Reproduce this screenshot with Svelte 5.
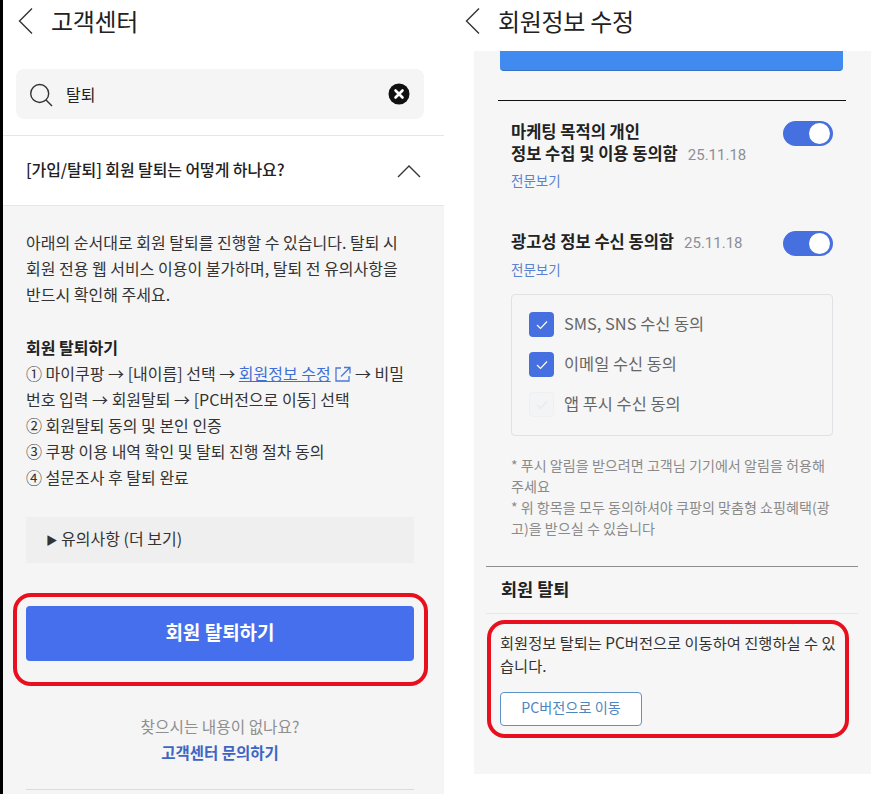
<script lang="ts">
  const steps = [
    "② 회원탈퇴 동의 및 본인 인증",
    "③ 쿠팡 이용 내역 확인 및 탈퇴 진행 절차 동의",
    "④ 설문조사 후 탈퇴 완료",
  ];
  const channels = [
    { label: "SMS, SNS 수신 동의", on: true },
    { label: "이메일 수신 동의", on: true },
    { label: "앱 푸시 수신 동의", on: false },
  ];
</script>

<div class="page">
  <section class="left">
    <header class="bar">
      <svg class="back" width="15" height="26" viewBox="0 0 15 26" aria-hidden="true"><path d="M14 .5 1.500 13 14 25.500" /></svg>
      <h1>고객센터</h1>
    </header>
    <div class="search-wrap">
      <div class="search">
        <svg width="26" height="26" viewBox="0 0 26 26" aria-hidden="true" class="lens">
          <circle cx="9.700" cy="12.500" r="9" />
          <path d="m16 19 6 6" />
        </svg>
        <span class="query">탈퇴</span>
        <svg class="clear" width="22" height="22" viewBox="0 0 22 22" aria-hidden="true">
          <circle cx="11" cy="11" r="10.5" fill="#111" />
          <path d="m7.500 7.500 7 7m0-7-7 7" stroke="#fff" stroke-width="2.6" stroke-linecap="round" />
        </svg>
      </div>
    </div>
    <div class="question">
      <strong>[가입/탈퇴] 회원 탈퇴는 어떻게 하나요?</strong>
      <svg width="24" height="14" viewBox="0 0 24 14" aria-hidden="true"><path d="M1 13 12 2l11 11" /></svg>
    </div>
    <div class="answer">
      <p class="intro">아래의 순서대로 회원 탈퇴를 진행할 수 있습니다. 탈퇴 시<br />회원 전용 웹 서비스 이용이 불가하며, 탈퇴 전 유의사항을<br />반드시 확인해 주세요.</p>
      <div class="how">
        <b>회원 탈퇴하기</b>
        <div>① 마이쿠팡 → [내이름] 선택 → <a href="#edit">회원정보 수정</a>
          <svg class="ext" width="17" height="17" viewBox="0 0 17 17" aria-hidden="true"><path d="M7 2H2v13h13v-5M10 1.500h6v6M16 1.500 7 10.500" /></svg> → 비밀</div>
        <div>번호 입력 → 회원탈퇴 → [PC버전으로 이동] 선택</div>
        {#each steps as step}
          <div>{step}</div>
        {/each}
      </div>
      <div class="notes"><span class="tri">▶</span> 유의사항 (더 보기)</div>
      <button class="primary">회원 탈퇴하기</button>
      <p class="none">찾으시는 내용이 없나요?</p>
      <a class="contact" href="#contact">고객센터 문의하기</a>
      <div class="end-rule"></div>
    </div>
    <div class="mark mark-left"></div>
  </section>

  <section class="right">
    <header class="bar bar-right">
      <svg class="back" width="15" height="26" viewBox="0 0 15 26" aria-hidden="true"><path d="M14 .5 1.500 13 14 25.500" /></svg>
      <h1>회원정보 수정</h1>
    </header>
    <div class="sheet">
      <div class="blue-strip"></div>
      <div class="black-rule"></div>
      <div class="agree first">
        <div>
          <strong>마케팅 목적의 개인<br />정보 수집 및 이용 동의함</strong><span class="date">25.11.18</span>
          <a href="#full">전문보기</a>
        </div>
        <span class="toggle"><i></i></span>
      </div>
      <div class="agree second">
        <div>
          <strong>광고성 정보 수신 동의함</strong><span class="date">25.11.18</span>
          <a href="#full">전문보기</a>
        </div>
        <span class="toggle"><i></i></span>
      </div>
      <div class="channels">
        {#each channels as c}
          <div class="channel">
            <span class="box" class:on={c.on}>
              <svg width="14" height="14" viewBox="0 0 14 14" aria-hidden="true"><path d="m2 7 3.500 3.500L12 3.500" /></svg>
            </span>
            <span class="label">{c.label}</span>
          </div>
        {/each}
      </div>
      <p class="fine">* 푸시 알림을 받으려면 고객님 기기에서 알림을 허용해<br />주세요<br />* 위 항목을 모두 동의하셔야 쿠팡의 맞춤형 쇼핑혜택(광<br />고)을 받으실 수 있습니다</p>
      <h2>회원 탈퇴</h2>
      <div class="leave">
        <p>회원정보 탈퇴는 PC버전으로 이동하여 진행하실 수 있<br />습니다.</p>
        <button class="outline">PC버전으로 이동</button>
      </div>
    </div>
    <div class="mark mark-right"></div>
  </section>
</div>

<style>
  :global(body) {
    margin: 0;
    background: #fff;
  }

  .page {
    position: relative;
    display: flex;
    width: 880px;
    height: 794px;
    overflow: hidden;
    font-family: "Noto Sans CJK KR", "Noto Sans", sans-serif;
    color: #222;
    background: #fff;
  }

  .left {
    position: relative;
    box-sizing: border-box;
    width: 444px;
    height: 794px;
    border-left: 3px solid #000;
    background: #fff;
  }

  .right {
    position: relative;
    margin-left: 30px;
    width: 397px;
    height: 794px;
  }

  .bar {
    display: flex;
    align-items: center;
    gap: 18px;
    height: 42px;
    padding-left: 15px;
  }

  .bar-right {
    height: 51px;
    padding: 0 0 9px 0;
    box-sizing: border-box;
    margin-left: -9px;
  }

  .back path,
  .lens circle,
  .lens path,
  .question path {
    fill: none;
    stroke: #333;
    stroke-width: 1.4;
  }

  h1 {
    margin: 0;
    padding-bottom: 2px;
    font-size: 24px;
    font-weight: 400;
    letter-spacing: -0.3px;
    color: #222;
  }

  .search-wrap {
    padding: 27px 20px 16px 13px;
    border-bottom: 1px solid #e6e6e6;
  }

  .search {
    display: flex;
    align-items: center;
    height: 50px;
    padding: 0 14px;
    border-radius: 8px;
    background: #f5f5f5;
  }

  .query {
    margin-left: 10px;
    font-size: 16px;
  }

  .clear {
    margin-left: auto;
  }

  .question {
    display: flex;
    align-items: center;
    justify-content: space-between;
    box-sizing: border-box;
    height: 70px;
    padding: 0 23px;
    border-bottom: 1px solid #e6e6e6;
    font-size: 16px;
  }

  .question strong {
    padding-bottom: 4px;
    font-weight: 500;
    letter-spacing: -0.1px;
    color: #222;
  }

  .answer {
    box-sizing: border-box;
    height: 588px;
    padding: 23px 30px 0 23px;
    background: #f5f5f5;
    font-size: 16px;
    line-height: 26px;
    color: #333;
  }

  .intro {
    margin: 0 0 27px;
    white-space: nowrap;
  }

  .how {
    white-space: nowrap;
  }

  .how b {
    font-weight: 700;
    color: #222;
  }

  .how a {
    color: #3d6fd6;
    text-decoration: underline;
  }

  .ext {
    vertical-align: -3px;
  }

  .ext path {
    fill: none;
    stroke: #4a78d8;
    stroke-width: 1.300;
  }

  .notes {
    box-sizing: border-box;
    height: 46px;
    margin-top: 27px;
    padding: 8px 20px;
    background: #efefef;
  }

  .tri {
    font-size: 11.500px;
  }

  button {
    font-family: inherit;
    cursor: pointer;
  }

  .primary {
    display: block;
    width: 100%;
    height: 55px;
    margin-top: 43px;
    padding-bottom: 5px;
    border: 0;
    border-radius: 4px;
    background: #466fee;
    color: #fff;
    font-size: 19px;
    font-weight: 700;
  }

  .none {
    margin: 53px 0 0;
    text-align: center;
    color: #8f8f8f;
    font-size: 15.700px;
  }

  .contact {
    display: block;
    margin-top: -1px;
    text-align: center;
    color: #3d66c4;
    font-size: 15.500px;
    font-weight: 700;
    text-decoration: none;
  }

  .end-rule {
    margin-top: 24px;
    height: 1px;
    background: #dcdcdc;
  }

  .sheet {
    box-sizing: border-box;
    height: 723px;
    background: #f6f6f6;
    padding: 0 38px 0 37px;
    color: #222;
  }

  .blue-strip {
    height: 20px;
    margin: 0 -10px 0 -11px;
    border-radius: 0 0 4px 4px;
    background: #418af0;
    border-bottom: 1px solid #3572c8;
    box-sizing: border-box;
  }

  .black-rule {
    height: 1px;
    margin: 29px -13px 0;
    background: #111;
  }

  .agree {
    display: flex;
    justify-content: space-between;
    align-items: flex-start;
    line-height: 22px;
  }

  .first {
    padding-top: 19px;
    height: 118px;
    box-sizing: border-box;
  }

  .second {
    height: 75px;
    padding-top: 11px;
    box-sizing: border-box;
  }

  .agree strong {
    font-size: 16.500px;
    font-weight: 700;
    line-height: 22px;
  }

  .date {
    margin-left: 10px;
    font-family: Roboto, sans-serif;
    font-size: 15px;
    line-height: 22px;
    color: #8e8e96;
  }

  .agree a {
    display: block;
    margin-top: 4px;
    font-size: 13.500px;
    line-height: 20px;
    color: #5b82cf;
    text-decoration: none;
  }

  .second a {
    margin-top: 5px;
  }

  .toggle {
    position: relative;
    flex: none;
    width: 50px;
    height: 25px;
    margin-top: 1px;
    border-radius: 13px;
    background: #466fe0;
  }

  .toggle i {
    position: absolute;
    top: 2px;
    right: 3px;
    width: 21px;
    height: 21px;
    border-radius: 50%;
    background: #fff;
  }

  .channels {
    box-sizing: border-box;
    height: 142px;
    padding: 17px 17px 0;
    border: 1px solid #dfe1e5;
    border-radius: 4px;
  }

  .channel {
    display: flex;
    align-items: center;
    gap: 10px;
    height: 25px;
    margin-bottom: 15px;
    font-size: 16.400px;
    color: #666;
  }

  .label {
    margin-bottom: 4px;
  }

  .box {
    display: grid;
    place-items: center;
    box-sizing: border-box;
    width: 25px;
    height: 25px;
    border: 1px solid #eeeff1;
    border-radius: 4px;
    background: #f3f4f5;
  }

  .box path {
    fill: none;
    stroke: #eaeaea;
    stroke-width: 1.200;
  }

  .box.on {
    border: 0;
    background: #466fe0;
  }

  .box.on path {
    stroke: #fff;
  }

  .fine {
    margin: 18.500px 0 0;
    font-size: 14.100px;
    line-height: 21.300px;
    color: #8a8a8a;
    white-space: nowrap;
  }

  h2 {
    margin: 26px -25px 0;
    padding: 10px 0 13px 15px;
    border-top: 1px solid #8c8c8c;
    border-bottom: 1px solid #e6e6e6;
    font-size: 17.500px;
    line-height: 23px;
    font-weight: 700;
    color: #222;
  }

  .leave {
    margin-left: -11px;
  }

  .leave p {
    margin: 17px 0 0;
    font-size: 15.300px;
    line-height: 23px;
    color: #333;
    white-space: nowrap;
  }

  .outline {
    display: block;
    width: 142px;
    height: 34px;
    margin-top: 15px;
    padding-bottom: 4px;
    border: 1px solid #5d93c6;
    border-radius: 4px;
    background: #fff;
    color: #4f86bd;
    font-size: 14.200px;
  }

  .mark {
    position: absolute;
    box-sizing: border-box;
    border: 4px solid #e8101e;
    border-radius: 18px;
  }

  .mark-left {
    left: 10px;
    top: 593px;
    width: 415px;
    height: 93px;
  }

  .mark-right {
    left: 13px;
    top: 620px;
    width: 362px;
    height: 118px;
  }
</style>
